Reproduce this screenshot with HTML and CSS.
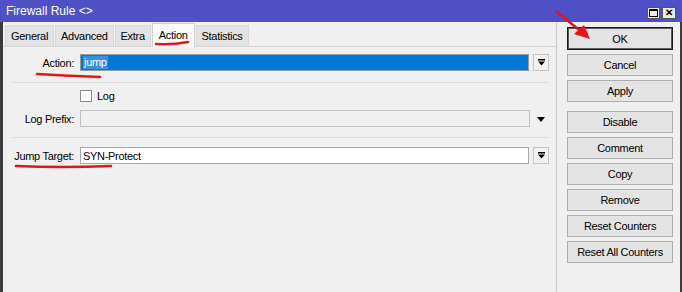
FILE: index.html
```html
<!DOCTYPE html>
<html lang="en">
<head>
  <meta charset="UTF-8" />
  <title>Firewall Rule</title>
  <link rel="stylesheet" href="styles.css">
</head>
<body>
  <div class="window">
    <div class="titlebar">
      <span class="title">Firewall Rule &lt;&gt;</span>
      <div class="win-btns">
        <span class="wbtn"><span class="max-box"></span></span>
        <span class="wbtn close">&#x2715;</span>
      </div>
    </div>

    <div class="frame">
      <div class="main">
        <div class="tabs">
          <span class="tab">General</span>
          <span class="tab">Advanced</span>
          <span class="tab">Extra</span>
          <span class="tab active">Action</span>
          <span class="tab">Statistics</span>
        </div>

        <div class="panel">
          <div class="row">
            <label class="lbl">Action:</label>
            <div class="field selected"><span class="sel-text">jump</span></div>
            <span class="dd-btn">
              <svg width="7" height="7" viewBox="0 0 7 7"><rect x="0" y="0" width="7" height="1.5" fill="#000"/><polygon points="0,2.5 7,2.5 3.5,6.5" fill="#000"/></svg>
            </span>
          </div>

          <div class="sep"></div>

          <div class="row check-row">
            <span class="checkbox"></span>
            <span class="check-lbl">Log</span>
          </div>

          <div class="row prefix-row">
            <label class="lbl">Log Prefix:</label>
            <div class="field disabled"></div>
            <span class="dd-arrow">
              <svg width="8" height="5" viewBox="0 0 8 5"><polygon points="0,0 8,0 4,5" fill="#000"/></svg>
            </span>
          </div>

          <div class="sep sep-2"></div>

          <div class="row jump-row">
            <label class="lbl">Jump Target:</label>
            <div class="field">SYN-Protect</div>
            <span class="dd-btn">
              <svg width="7" height="7" viewBox="0 0 7 7"><rect x="0" y="0" width="7" height="1.5" fill="#000"/><polygon points="0,2.5 7,2.5 3.5,6.5" fill="#000"/></svg>
            </span>
          </div>
        </div>
      </div>

      <div class="side">
        <button class="btn default">OK</button>
        <button class="btn">Cancel</button>
        <button class="btn">Apply</button>
        <button class="btn group-start">Disable</button>
        <button class="btn">Comment</button>
        <button class="btn">Copy</button>
        <button class="btn">Remove</button>
        <button class="btn">Reset Counters</button>
        <button class="btn">Reset All Counters</button>
      </div>
    </div>

    <!-- red annotation marks drawn over the screenshot -->
    <svg class="marks" width="682" height="292" viewBox="0 0 682 292">
      <path d="M156 44 Q172 45 188 42" />
      <path d="M37 74 Q70 76 100 77" />
      <path d="M16 166 Q60 168 111 166" />
      <path d="M557 12 L583 33" />
      <polygon points="590,39 574,34 584,25" />
    </svg>
  </div>
</body>
</html>
```

FILE: styles.css
```css
* {
  box-sizing: border-box;
}

body {
  margin: 0;
  background: #fff;
  font-family: "Liberation Sans", Arial, sans-serif;
  font-size: 11px;
  letter-spacing: -0.3px;
  color: #000;
}

.window {
  position: relative;
  width: 682px;
  height: 292px;
  overflow: hidden;
  background: #f0f0f0;
}

.titlebar {
  height: 22px;
  background: #5050c6;
  color: #fff;
  display: flex;
  align-items: center;
  justify-content: space-between;
  padding: 0 6px;
}

.title {
  font-size: 12px;
  letter-spacing: 0;
}

.win-btns {
  display: flex;
  gap: 2px;
  margin-top: 3px;
}

.wbtn {
  width: 13px;
  height: 12px;
  background: #ececec;
  border: 1px solid #555;
  display: flex;
  align-items: center;
  justify-content: center;
  color: #000;
}

.wbtn.close {
  width: 14px;
  font-size: 10px;
  font-weight: bold;
  letter-spacing: 0;
}

.max-box {
  width: 9px;
  height: 8px;
  border: 1px solid #000;
  border-top-width: 2px;
}

.frame {
  display: flex;
  height: 270px;
  border-left: 3px solid #3b3b3b;
  border-right: 2px solid #3b3b3b;
}

.main {
  width: 554px;
  border-right: 1px solid #c9c9c9;
}

.tabs {
  display: flex;
  align-items: flex-end;
  height: 25px;
  padding-left: 2px;
  border-bottom: 1px solid #d6d6d6;
}

.tab {
  height: 21px;
  padding: 0 5px;
  margin-right: 1px;
  display: flex;
  align-items: center;
  background: #e3e3e3;
  border: 1px solid #d9d9d9;
  border-bottom: none;
}

.tab.active {
  height: 24px;
  margin-bottom: -1px;
  background: #fafafa;
  border-color: #d0d0d0;
  padding: 0 6px 2px;
}

.panel {
  padding-top: 7px;
}

.row {
  display: flex;
  align-items: center;
  height: 17px;
}

.lbl {
  width: 71px;
  margin-right: 6px;
  text-align: right;
}

.field {
  width: 449px;
  height: 17px;
  border: 1px solid #a9a9a9;
  background: #fff;
  padding-left: 2px;
  display: flex;
  align-items: center;
}

.field.selected {
  background: #0078d7;
  border-color: #9a9a9a;
}

.sel-text {
  color: #fff;
  background: #3a8fe0;
  padding: 0 1px;
  line-height: 13px;
}

.field.disabled {
  width: 450px;
  background: #f0f0f0;
  border-color: #c2c2c2;
}

.dd-btn {
  width: 16px;
  height: 17px;
  margin-left: 4px;
  border: 1px solid #c4c4c4;
  background: #f2f2f2;
  display: flex;
  align-items: center;
  justify-content: center;
}

.dd-arrow {
  margin-left: 7px;
  display: flex;
  align-items: center;
  margin-top: 1px;
}

.sep {
  height: 1px;
  margin: 11px 0 0 9px;
  width: 537px;
  background: #dcdcdc;
}

.check-row {
  margin-top: 7px;
  height: 12px;
  padding-left: 77px;
}

.checkbox {
  width: 12px;
  height: 12px;
  border: 1px solid #8c8c8c;
  background: #fff;
}

.check-lbl {
  margin-left: 5px;
}

.prefix-row {
  margin-top: 8px;
}

.sep-2 {
  margin-top: 10px;
}

.jump-row {
  margin-top: 9px;
}

.side {
  display: flex;
  flex-direction: column;
  padding: 5px 0 0 10px;
}

.btn {
  width: 106px;
  height: 22px;
  margin-bottom: 4px;
  border: 1px solid #adadad;
  background: #e4e4e4;
  font-family: "Liberation Sans", Arial, sans-serif;
  font-size: 11px;
  letter-spacing: -0.3px;
  color: #000;
  padding: 0;
}

.btn.default {
  height: 23px;
  border: 1px solid #1a1a1a;
  box-shadow: inset 0 0 0 1px #5a5a5a;
}

.btn.group-start {
  margin-top: 5px;
}

.marks {
  position: absolute;
  left: 0;
  top: 0;
  pointer-events: none;
}

.marks path {
  fill: none;
  stroke: #e3141b;
  stroke-width: 2.6;
  stroke-linecap: round;
}

.marks polygon {
  fill: #e3141b;
}
```
